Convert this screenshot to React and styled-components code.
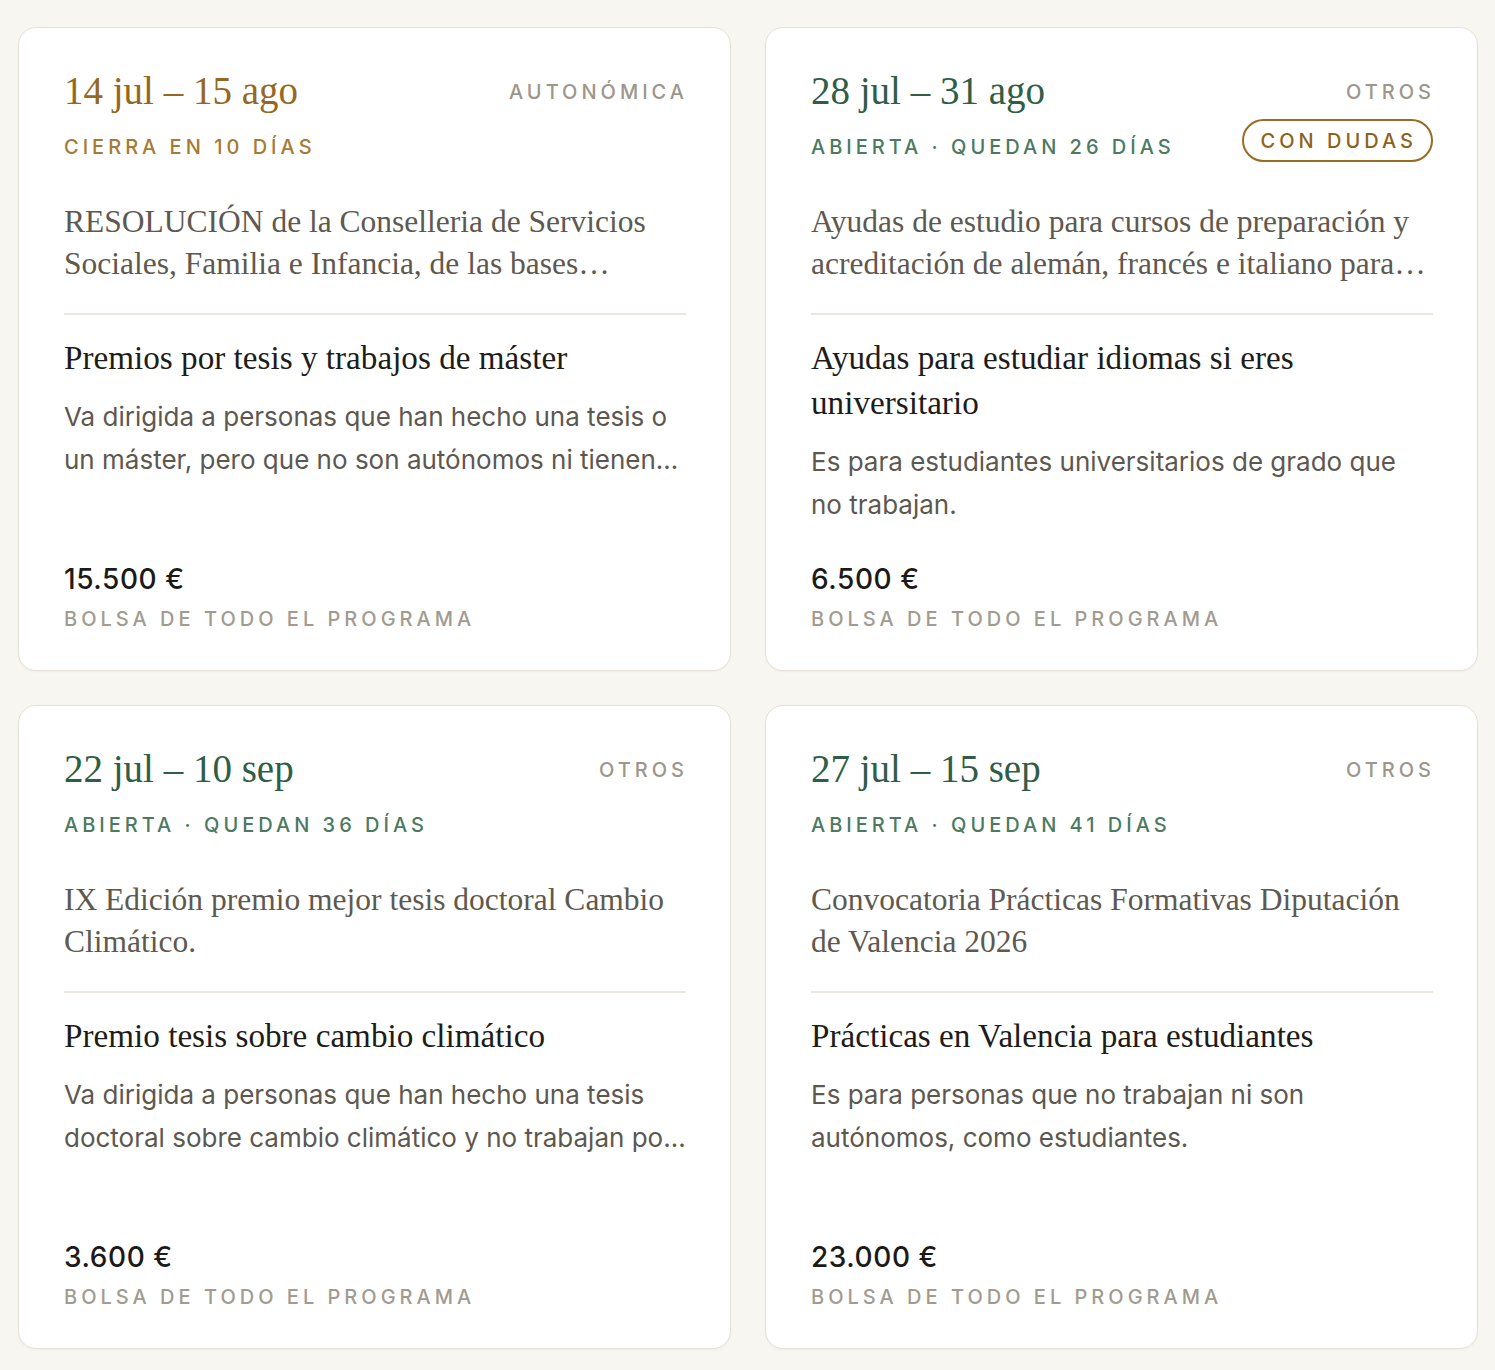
import styled, { createGlobalStyle, css } from 'styled-components'

const GlobalStyle = createGlobalStyle`
  body {
    margin: 0;
    background-color: #f8f6f1;
    font-family: Inter, 'Liberation Sans', sans-serif;
    -webkit-font-smoothing: antialiased;
  }
`

const tones = {
  gold: { date: '#94681f', status: '#a57a34' },
  green: { date: '#2f5d45', status: '#4b7a61' }
}

const clamp = css`
  display: -webkit-box;
  -webkit-box-orient: vertical;
  -webkit-line-clamp: 2;
  overflow: hidden;
`

const caps = css`
  font-family: Inter, 'Liberation Sans', sans-serif;
  font-size: 20px;
  line-height: 24px;
  font-weight: 500;
  letter-spacing: 0.2em;
  text-transform: uppercase;
`

const serif = css`
  font-family: 'Liberation Serif', 'Times New Roman', serif;
  font-weight: 400;
`

const Grid = styled.main`
  display: grid;
  grid-template-columns: repeat(2, 1fr);
  gap: 34px;
  padding: 27px 17px 20px 18px;
`

const Card = styled.article`
  display: flex;
  flex-direction: column;
  box-sizing: border-box;
  min-height: 644px;
  padding: 44px 44px 39px 45px;
  background-color: #fff;
  border: 1.5px solid #e6e1d6;
  border-radius: 18px;
  box-shadow: 0 1px 2px rgba(70, 60, 40, 0.04);
`

const Header = styled.header`
  display: flex;
  justify-content: space-between;
  align-items: flex-start;
  gap: 16px;
`

const DateBlock = styled.div`
  display: flex;
  flex-direction: column;
`

const DateRange = styled.div`
  ${serif};
  font-size: 39px;
  line-height: 38.5px;
  color: ${p => tones[p.$tone].date};
`

const Status = styled.div`
  ${caps};
  margin-top: 24.5px;
  color: ${p => tones[p.$tone].status};
`

const Aside = styled.div`
  display: flex;
  flex-direction: column;
  align-items: flex-end;
`

const Category = styled.span`
  ${caps};
  padding-top: 8px;
  margin-right: -2px;
  color: #9c968b;
`

const Badge = styled.span`
  ${caps};
  display: inline-flex;
  align-items: center;
  box-sizing: border-box;
  height: 43px;
  margin-top: 15px;
  margin-bottom: -3px;
  padding: 0 14px 0 17px;
  border: 2px solid #9a6b22;
  border-radius: 999px;
  color: #8e621c;
  font-weight: 500;
`

const Description = styled.p`
  ${serif};
  ${clamp};
  margin: 41.5px 0 0;
  font-size: 31.5px;
  line-height: 42px;
  color: #5e594f;
`

const Divider = styled.hr`
  height: 2px;
  margin: 28px 0 0;
  border: 0;
  background-color: #ebe7de;
`

const Title = styled.h3`
  ${serif};
  margin: 20.5px 0 0;
  font-size: 33.2px;
  line-height: 45px;
  color: #1e1c18;
`

const Summary = styled.p`
  ${clamp};
  margin: 16px 0 0;
  font-size: 26px;
  line-height: 42.5px;
  color: #5d584f;
`

const Footer = styled.footer`
  display: flex;
  flex-direction: column;
  margin-top: auto;
  padding-top: 24px;
`

const Amount = styled.span`
  font-size: 28px;
  line-height: 34px;
  font-weight: 500;
  letter-spacing: 0.02em;
  color: #1b1a17;
`

const PoolLabel = styled.span`
  ${caps};
  margin-top: 11px;
  color: #a19b90;
`

const calls = [
  {
    range: '14 jul – 15 ago',
    tone: 'gold',
    status: 'Cierra en 10 días',
    category: 'Autonómica',
    description:
      'RESOLUCIÓN de la Conselleria de Servicios Sociales, Familia e Infancia, de las bases reguladoras de los premios',
    title: 'Premios por tesis y trabajos de máster',
    summary:
      'Va dirigida a personas que han hecho una tesis o un máster, pero que no son autónomos ni tienen empresa propia.',
    amount: '15.500 €'
  },
  {
    range: '28 jul – 31 ago',
    tone: 'green',
    status: 'Abierta · Quedan 26 días',
    category: 'Otros',
    badge: 'Con dudas',
    description:
      'Ayudas de estudio para cursos de preparación y acreditación de alemán, francés e italiano para estudiantes universitarios',
    title: 'Ayudas para estudiar idiomas si eres universitario',
    summary: 'Es para estudiantes universitarios de grado que no trabajan.',
    amount: '6.500 €'
  },
  {
    range: '22 jul – 10 sep',
    tone: 'green',
    status: 'Abierta · Quedan 36 días',
    category: 'Otros',
    description: 'IX Edición premio mejor tesis doctoral Cambio Climático.',
    title: 'Premio tesis sobre cambio climático',
    summary:
      'Va dirigida a personas que han hecho una tesis doctoral sobre cambio climático y no trabajan por cuenta propia.',
    amount: '3.600 €'
  },
  {
    range: '27 jul – 15 sep',
    tone: 'green',
    status: 'Abierta · Quedan 41 días',
    category: 'Otros',
    description: 'Convocatoria Prácticas Formativas Diputación de Valencia 2026',
    title: 'Prácticas en Valencia para estudiantes',
    summary: 'Es para personas que no trabajan ni son autónomos, como estudiantes.',
    amount: '23.000 €'
  }
]

const CallCard = ({ call }) => (
  <Card>
    <Header>
      <DateBlock>
        <DateRange $tone={call.tone}>{call.range}</DateRange>
        <Status $tone={call.tone}>{call.status}</Status>
      </DateBlock>
      <Aside>
        <Category>{call.category}</Category>
        {call.badge && <Badge>{call.badge}</Badge>}
      </Aside>
    </Header>
    <Description>{call.description}</Description>
    <Divider />
    <Title>{call.title}</Title>
    <Summary>{call.summary}</Summary>
    <Footer>
      <Amount>{call.amount}</Amount>
      <PoolLabel>Bolsa de todo el programa</PoolLabel>
    </Footer>
  </Card>
)

const App = () => (
  <>
    <GlobalStyle />
    <Grid>
      {calls.map(call => (
        <CallCard key={call.range} call={call} />
      ))}
    </Grid>
  </>
)

export default App
